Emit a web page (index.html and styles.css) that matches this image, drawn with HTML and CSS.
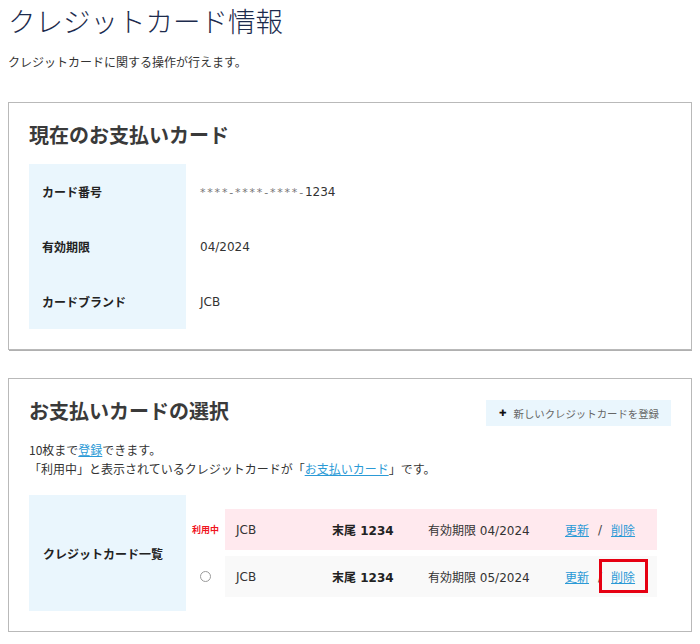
FILE: index.html
```html
<!DOCTYPE html>
<html lang="ja">
<head>
<meta charset="utf-8">
<title>クレジットカード情報</title>
<link rel="stylesheet" href="styles.css">
</head>
<body>
<h1 class="page-title">クレジットカード情報</h1>
<p class="lead">クレジットカードに関する操作が行えます。</p>

<section class="card card-current">
  <h2 class="card-title">現在のお支払いカード</h2>
  <table class="info">
    <tr><th>カード番号</th><td><span class="mask">****-****-****-</span>1234</td></tr>
    <tr><th>有効期限</th><td>04/2024</td></tr>
    <tr><th>カードブランド</th><td>JCB</td></tr>
  </table>
</section>

<section class="card card-select">
  <div class="card-head">
    <h2 class="card-title">お支払いカードの選択</h2>
    <button class="btn-add" type="button"><span class="plus">✚</span>新しいクレジットカードを登録</button>
  </div>
  <p class="note">10枚まで<a href="#" class="link">登録</a>できます。<br>「利用中」と表示されているクレジットカードが「<a href="#" class="link">お支払いカード</a>」です。</p>
  <div class="list">
    <div class="list-label">クレジットカード一覧</div>
    <div class="list-body">
      <div class="row">
        <div class="status"><span class="in-use">利用中</span></div>
        <div class="row-main row-active">
          <span class="brand">JCB</span>
          <span class="last4">末尾 1234</span>
          <span class="expiry">有効期限 04/2024</span>
          <span class="actions"><a href="#" class="link">更新</a><span class="sep">/</span><a href="#" class="link">削除</a></span>
        </div>
      </div>
      <div class="row">
        <div class="status"><span class="radio"></span></div>
        <div class="row-main row-normal">
          <span class="brand">JCB</span>
          <span class="last4">末尾 1234</span>
          <span class="expiry">有効期限 05/2024</span>
          <span class="actions"><a href="#" class="link">更新</a><span class="sep">/</span><a href="#" class="link link-mark">削除<span class="mark"></span></a></span>
        </div>
      </div>
    </div>
  </div>
</section>
</body>
</html>
```
FILE: styles.css
```css
html, body {
  margin: 0;
  padding: 0;
  background: #fff;
}
body {
  margin: 0 8px;
  font-family: "DejaVu Sans", "Noto Sans CJK JP", sans-serif;
  font-size: 12px;
  color: #333;
}
.page-title {
  margin: 0;
  font-family: "Noto Sans CJK JP", sans-serif;
  font-weight: 300;
  font-size: 27.5px;
  line-height: 40px;
  color: #1c2b4d;
}
.lead {
  margin: 12px 0 0;
  font-family: "Noto Sans CJK JP", sans-serif;
  line-height: 19px;
  color: #333;
}
.card {
  border: 1px solid #b9b9b9;
  box-shadow: 1px 1px 0 #b0b0b0;
  padding: 17px 20px 20px;
  background: #fff;
}
.card-current {
  margin-top: 31px;
}
.card-select {
  margin-top: 28px;
}
.card-title {
  margin: 0;
  font-family: "Noto Sans CJK JP", sans-serif;
  font-weight: 700;
  font-size: 20px;
  line-height: 30px;
  color: #3a3a3a;
}
.card-current .card-title {
  margin-bottom: 14px;
}
.info {
  border-collapse: collapse;
  width: 100%;
}
.info th {
  width: 157px;
  box-sizing: border-box;
  height: 55px;
  padding: 0 0 0 13px;
  background: #eaf6fd;
  text-align: left;
  font-family: "Noto Sans CJK JP", sans-serif;
  font-weight: 700;
  font-size: 12px;
  color: #222;
}
.info td {
  padding: 0 0 0 14px;
  height: 55px;
  color: #333;
}
.mask {
  letter-spacing: 1.8px;
  color: #777;
  font-size: 11px;
}
.card-head {
  display: flex;
  align-items: center;
  justify-content: space-between;
}
.btn-add {
  display: flex;
  align-items: center;
  height: 26px;
  margin-top: 4px;
  padding: 0 12px 0 13px;
  border: 0;
  background: #eaf6fd;
  font-family: "Noto Sans CJK JP", sans-serif;
  font-size: 10.4px;
  color: #666;
  cursor: pointer;
}
.plus {
  font-size: 9px;
  color: #111;
  margin-right: 7px;
  font-family: "DejaVu Sans", sans-serif;
}
.note {
  margin: 14px 0 0;
  font-family: "Noto Sans CJK JP", sans-serif;
  line-height: 19px;
  color: #333;
}
.link {
  color: #2b9ad6;
  text-decoration: underline;
}
.list {
  display: flex;
  margin-top: 17px;
}
.list-label {
  width: 157px;
  flex: none;
  box-sizing: border-box;
  padding-left: 14px;
  display: flex;
  align-items: center;
  background: #eaf6fd;
  font-family: "Noto Sans CJK JP", sans-serif;
  font-weight: 700;
  color: #222;
}
.list-body {
  flex: 1;
  display: flex;
  flex-direction: column;
  gap: 6px;
  padding: 14px 14px 14px 0;
}
.row {
  display: flex;
  height: 41px;
}
.status {
  width: 39px;
  flex: none;
  display: flex;
  align-items: center;
  justify-content: center;
}
.in-use {
  font-family: "Noto Sans CJK JP", sans-serif;
  font-weight: 700;
  font-size: 9px;
  color: #f0141e;
}
.radio {
  width: 9px;
  height: 9px;
  border: 1px solid #9a9a9a;
  border-radius: 50%;
  background: #fff;
}
.row-main {
  flex: 1;
  display: grid;
  grid-template-columns: 96px 96px 137px auto;
  align-items: center;
  padding-left: 11px;
  color: #333;
}
.row-active {
  background: #ffe9ee;
}
.row-normal {
  background: #f9f9f9;
}
.last4 {
  font-weight: 700;
  color: #222;
}
.actions {
  display: flex;
  align-items: center;
  font-family: "Noto Sans CJK JP", sans-serif;
}
.sep {
  margin: 0 9px;
  color: #444;
  font-family: "DejaVu Sans", sans-serif;
}
.link-mark {
  position: relative;
}
.mark {
  position: absolute;
  left: -12px;
  right: -13px;
  top: -9px;
  bottom: -8px;
  border: 3px solid #e60012;
}
```
